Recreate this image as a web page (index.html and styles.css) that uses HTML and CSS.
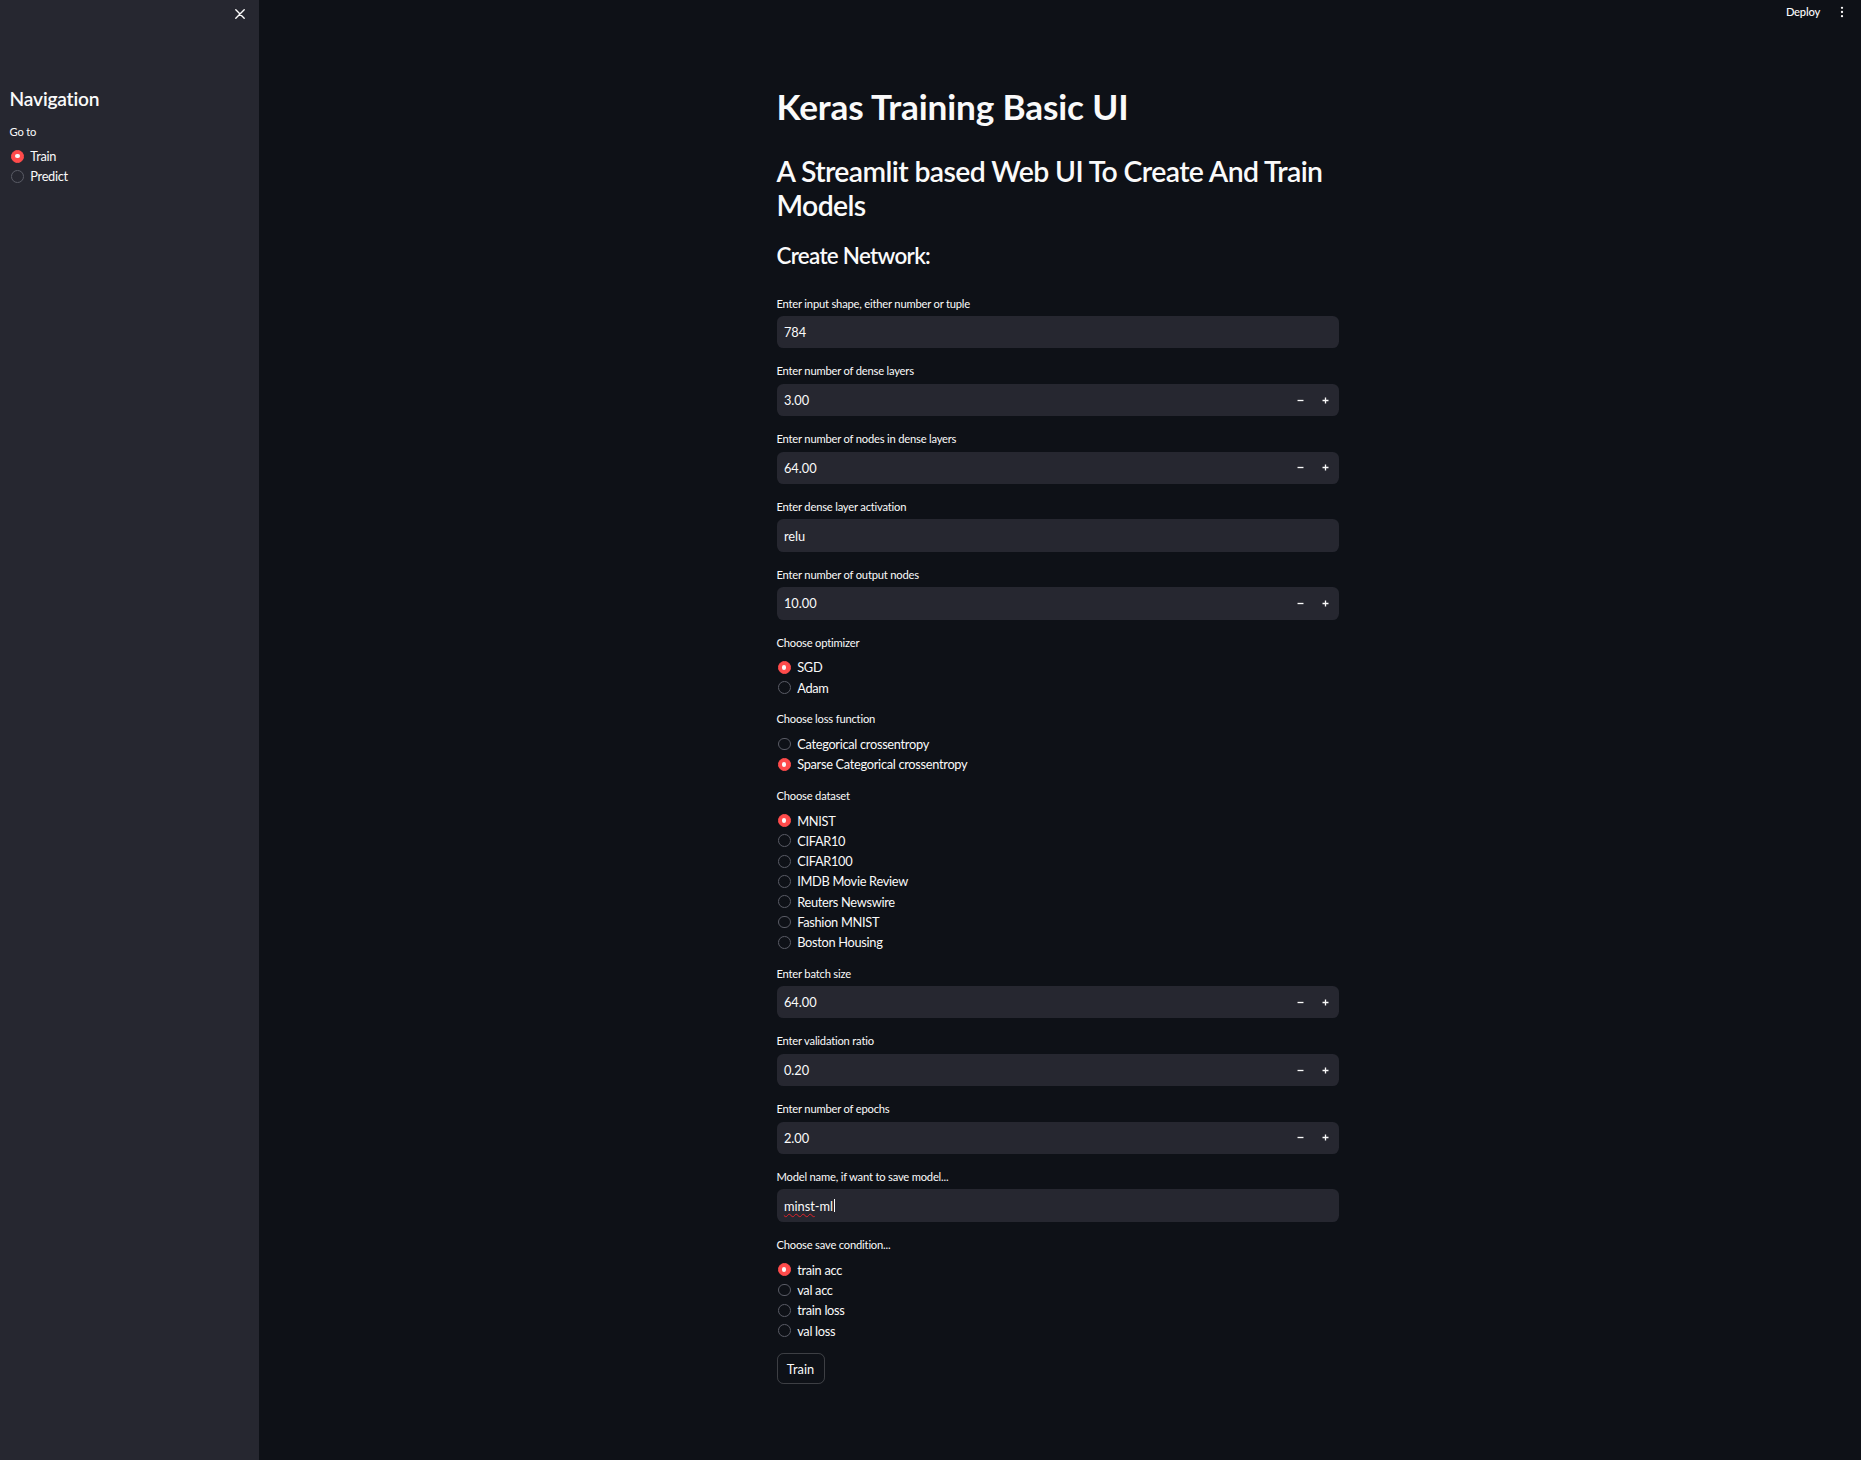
FILE: index.html
```html
<!DOCTYPE html>
<html lang="en">
<head>
<meta charset="utf-8">
<title>Keras Training Basic UI</title>
<link rel="stylesheet" href="styles.css">
</head>
<body>
<div class="app">
  <aside class="sidebar">
    <div class="sidebar-head">
      <svg class="close-icon" viewBox="0 0 10 10"><path d="M0.8 0.8 L9.2 9.2 M9.2 0.8 L0.8 9.2" stroke="#fafafa" stroke-width="1.4" stroke-linecap="round" fill="none"/></svg>
    </div>
    <div class="sidebar-body">
      <h2 class="nav-title">Navigation</h2>
      <div class="widget side-widget">
        <div class="wlabel">Go to</div>
        <div class="radio-group side-group">
          <div class="radio-row"><span class="dot on"></span><span>Train</span></div>
          <div class="radio-row"><span class="dot"></span><span>Predict</span></div>
        </div>
      </div>
    </div>
  </aside>

  <main class="main">
    <div class="topbar">
      <span class="deploy">Deploy</span>
      <svg class="kebab" viewBox="0 0 4 12"><circle cx="2" cy="1.8" r="1.15" fill="#fafafa"/><circle cx="2" cy="6" r="1.15" fill="#fafafa"/><circle cx="2" cy="10.2" r="1.15" fill="#fafafa"/></svg>
    </div>

    <div class="content">
      <h1 class="title">Keras Training Basic UI</h1>
      <h2 class="subtitle">A Streamlit based Web UI To Create And Train Models</h2>
      <h3 class="section">Create Network:</h3>

      <div class="form">
        <div class="widget">
          <div class="wlabel">Enter input shape, either number or tuple</div>
          <div class="field"><span class="fvalue">784</span></div>
        </div>

        <div class="widget">
          <div class="wlabel">Enter number of dense layers</div>
          <div class="field num"><span class="fvalue">3.00</span><span class="step"><svg viewBox="0 0 8 8"><path d="M0.6 4 H7.4" stroke="#fafafa" stroke-width="1.5"/></svg></span><span class="step"><svg viewBox="0 0 8 8"><path d="M0.6 4 H7.4 M4 0.6 V7.4" stroke="#fafafa" stroke-width="1.5"/></svg></span></div>
        </div>

        <div class="widget">
          <div class="wlabel">Enter number of nodes in dense layers</div>
          <div class="field num"><span class="fvalue">64.00</span><span class="step"><svg viewBox="0 0 8 8"><path d="M0.6 4 H7.4" stroke="#fafafa" stroke-width="1.5"/></svg></span><span class="step"><svg viewBox="0 0 8 8"><path d="M0.6 4 H7.4 M4 0.6 V7.4" stroke="#fafafa" stroke-width="1.5"/></svg></span></div>
        </div>

        <div class="widget">
          <div class="wlabel">Enter dense layer activation</div>
          <div class="field"><span class="fvalue">relu</span></div>
        </div>

        <div class="widget">
          <div class="wlabel">Enter number of output nodes</div>
          <div class="field num"><span class="fvalue">10.00</span><span class="step"><svg viewBox="0 0 8 8"><path d="M0.6 4 H7.4" stroke="#fafafa" stroke-width="1.5"/></svg></span><span class="step"><svg viewBox="0 0 8 8"><path d="M0.6 4 H7.4 M4 0.6 V7.4" stroke="#fafafa" stroke-width="1.5"/></svg></span></div>
        </div>

        <div class="widget radio-widget">
          <div class="wlabel">Choose optimizer</div>
          <div class="radio-group">
            <div class="radio-row"><span class="dot on"></span><span>SGD</span></div>
            <div class="radio-row"><span class="dot"></span><span>Adam</span></div>
          </div>
        </div>

        <div class="widget radio-widget">
          <div class="wlabel">Choose loss function</div>
          <div class="radio-group">
            <div class="radio-row"><span class="dot"></span><span>Categorical crossentropy</span></div>
            <div class="radio-row"><span class="dot on"></span><span>Sparse Categorical crossentropy</span></div>
          </div>
        </div>

        <div class="widget radio-widget">
          <div class="wlabel">Choose dataset</div>
          <div class="radio-group">
            <div class="radio-row"><span class="dot on"></span><span>MNIST</span></div>
            <div class="radio-row"><span class="dot"></span><span>CIFAR10</span></div>
            <div class="radio-row"><span class="dot"></span><span>CIFAR100</span></div>
            <div class="radio-row"><span class="dot"></span><span>IMDB Movie Review</span></div>
            <div class="radio-row"><span class="dot"></span><span>Reuters Newswire</span></div>
            <div class="radio-row"><span class="dot"></span><span>Fashion MNIST</span></div>
            <div class="radio-row"><span class="dot"></span><span>Boston Housing</span></div>
          </div>
        </div>

        <div class="widget">
          <div class="wlabel">Enter batch size</div>
          <div class="field num"><span class="fvalue">64.00</span><span class="step"><svg viewBox="0 0 8 8"><path d="M0.6 4 H7.4" stroke="#fafafa" stroke-width="1.5"/></svg></span><span class="step"><svg viewBox="0 0 8 8"><path d="M0.6 4 H7.4 M4 0.6 V7.4" stroke="#fafafa" stroke-width="1.5"/></svg></span></div>
        </div>

        <div class="widget">
          <div class="wlabel">Enter validation ratio</div>
          <div class="field num"><span class="fvalue">0.20</span><span class="step"><svg viewBox="0 0 8 8"><path d="M0.6 4 H7.4" stroke="#fafafa" stroke-width="1.5"/></svg></span><span class="step"><svg viewBox="0 0 8 8"><path d="M0.6 4 H7.4 M4 0.6 V7.4" stroke="#fafafa" stroke-width="1.5"/></svg></span></div>
        </div>

        <div class="widget">
          <div class="wlabel">Enter number of epochs</div>
          <div class="field num"><span class="fvalue">2.00</span><span class="step"><svg viewBox="0 0 8 8"><path d="M0.6 4 H7.4" stroke="#fafafa" stroke-width="1.5"/></svg></span><span class="step"><svg viewBox="0 0 8 8"><path d="M0.6 4 H7.4 M4 0.6 V7.4" stroke="#fafafa" stroke-width="1.5"/></svg></span></div>
        </div>

        <div class="widget">
          <div class="wlabel">Model name, if want to save model...</div>
          <div class="field"><span class="fvalue"><span class="misspelled">minst</span>-ml<span class="caret"></span></span></div>
        </div>

        <div class="widget radio-widget">
          <div class="wlabel">Choose save condition...</div>
          <div class="radio-group">
            <div class="radio-row"><span class="dot on"></span><span>train acc</span></div>
            <div class="radio-row"><span class="dot"></span><span>val acc</span></div>
            <div class="radio-row"><span class="dot"></span><span>train loss</span></div>
            <div class="radio-row"><span class="dot"></span><span>val loss</span></div>
          </div>
        </div>

        <button class="btn" type="button">Train</button>
      </div>
    </div>
  </main>
</div>
</body>
</html>
```
FILE: styles.css
```css
* { box-sizing: border-box; }
html, body { margin: 0; padding: 0; }
body {
  background: #0e1117;
  color: #fafafa;
  font-family: Lato, "Noto Sans", sans-serif;
  font-size: 12.8px;
}
.app { display: flex; min-height: 1460px; }

/* sidebar */
.sidebar { width: 259px; flex-shrink: 0; background: #262730; }
.sidebar-head {
  height: 28px;
  display: flex;
  align-items: center;
  justify-content: flex-end;
  padding-right: 14px;
}
.close-icon { width: 10px; height: 10px; display: block; }
.sidebar-body { padding: 59px 9.6px 0; }
.nav-title {
  margin: 0;
  font-size: 19.2px;
  font-weight: 600;
  line-height: 23px;
  letter-spacing: -0.2px;
}
.side-widget { margin-top: 12px; }

/* main */
.main {
  flex: 1;
  display: flex;
  justify-content: center;
  padding-right: 5px;
  position: relative;
}
.topbar {
  position: absolute;
  top: 0;
  right: 14px;
  height: 23px;
  display: flex;
  align-items: center;
  gap: 17px;
}
.deploy { font-size: 11.2px; font-weight: 500; letter-spacing: -0.2px; }
.kebab { width: 4px; height: 12px; display: block; margin: 0 3px; }

.content { width: 562px; padding-top: 85px; display: flex; flex-direction: column; }
.title {
  margin: 0;
  font-size: 35.2px;
  font-weight: 700;
  line-height: 42px;
  letter-spacing: -0.15px;
}
.subtitle {
  margin: 27px 0 0;
  font-size: 28.4px;
  font-weight: 600;
  line-height: 34px;
  letter-spacing: -0.6px;
}
.section {
  margin: 19.5px 0 0;
  font-size: 22.4px;
  font-weight: 600;
  line-height: 27px;
  letter-spacing: -0.7px;
}

.form { margin-top: 25px; display: flex; flex-direction: column; gap: 12.8px; }
.widget { display: flex; flex-direction: column; }
.wlabel {
  height: 19.4px;
  display: flex;
  align-items: center;
  font-size: 11.2px;
  letter-spacing: -0.2px;
  margin-bottom: 3.2px;
}
.field {
  height: 32.4px;
  background: #262730;
  border-radius: 6.4px;
  display: flex;
  align-items: center;
}
.fvalue { flex: 1; padding-left: 7.4px; font-size: 12.8px; display: flex; align-items: center; }
.step {
  width: 25.6px;
  height: 100%;
  display: flex;
  align-items: center;
  justify-content: center;
}
.step svg { width: 7px; height: 7px; display: block; }
.misspelled {
  text-decoration: underline wavy #e0242b;
  text-decoration-thickness: 1px;
  text-underline-offset: 2px;
}
.caret { display: inline-block; width: 1px; height: 13px; background: #fafafa; margin-left: 1px; }

.radio-widget { margin-bottom: -1.8px; }
.radio-group { padding-top: 2.4px; display: flex; flex-direction: column; }
.side-widget .radio-group { padding-top: 1.4px; }
.radio-row {
  height: 20.3px;
  display: flex;
  align-items: center;
  gap: 6.6px;
  padding-left: 1.3px;
  font-size: 12.8px;
  letter-spacing: -0.3px;
}
.dot {
  width: 12.8px;
  height: 12.8px;
  border-radius: 50%;
  border: 1.4px solid #5a5c66;
  flex-shrink: 0;
  position: relative;
}
.dot.on { background: #ff4b4b; border-color: #ff4b4b; }
.dot.on::after {
  content: "";
  position: absolute;
  left: 50%;
  top: 50%;
  width: 4.6px;
  height: 4.6px;
  margin: -2.3px 0 0 -2.3px;
  border-radius: 50%;
  background: #fafafa;
}

.btn {
  align-self: flex-start;
  margin-top: 1.6px;
  width: 48px;
  height: 31px;
  background: transparent;
  border: 1px solid rgba(250, 250, 250, 0.2);
  border-radius: 6.4px;
  color: #fafafa;
  font-family: inherit;
  font-size: 12.8px;
  padding: 0;
}
```
